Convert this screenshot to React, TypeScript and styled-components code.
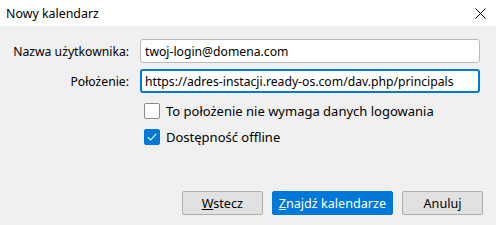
import { FC } from "react"
import styled, { createGlobalStyle } from "styled-components"

const GlobalStyle = createGlobalStyle`
  html, body {
    margin: 0;
    padding: 0;
    background: #f0f0f0;
  }
  body {
    font-family: "Noto Sans", "Segoe UI", "Liberation Sans", sans-serif;
    font-size: 12.4px;
    color: #000;
  }
`

const Window = styled.div`
  width: 496px;
  height: 225px;
  display: flex;
  flex-direction: column;
  background: #f0f0f0;
  overflow: hidden;
`

const TitleBar = styled.div`
  height: 26px;
  flex: none;
  display: flex;
  align-items: center;
  justify-content: space-between;
  padding: 0 8px 0 6px;
  background: #fff;
`

const CloseButton = styled.div`
  width: 12px;
  height: 12px;
  display: flex;
  align-items: center;
  justify-content: center;
  margin-right: 2px;
`

const Body = styled.div`
  flex: 1;
  display: flex;
  flex-direction: column;
  padding-top: 13px;
`

const FormGrid = styled.div`
  display: grid;
  grid-template-columns: 129px 340px;
  column-gap: 11px;
  row-gap: 6px;
  align-items: center;
`

const Label = styled.label`
  text-align: right;
  white-space: nowrap;
  font-size: 12.2px;
`

const TextInput = styled.div<{ focused?: boolean }>`
  height: 24px;
  box-sizing: border-box;
  display: flex;
  align-items: center;
  padding: 0 ${({ focused }) => (focused ? "3px" : "4px")};
  font-size: 12.2px;
  background: #fff;
  border: ${({ focused }) =>
    focused ? "2px solid #0078d7" : "1px solid #b9b9b9"};
  border-radius: 3px;
  white-space: nowrap;
  overflow: hidden;
`

const Options = styled.div`
  display: flex;
  flex-direction: column;
  gap: 10px;
  padding-left: 144px;
  margin-top: 10px;
  font-size: 13px;
`

const OptionRow = styled.div`
  display: flex;
  align-items: center;
  gap: 6px;
  height: 16px;
`

const Box = styled.span<{ checked?: boolean }>`
  width: 16px;
  height: 16px;
  box-sizing: border-box;
  display: flex;
  align-items: center;
  justify-content: center;
  border-radius: 2px;
  border: 1px solid ${({ checked }) => (checked ? "#0078d7" : "#8a8a8a")};
  background: ${({ checked }) => (checked ? "#0078d7" : "#fff")};
`

const Footer = styled.div`
  margin-top: auto;
  display: flex;
  justify-content: flex-end;
  gap: 9px;
  padding: 0 13px 10px 0;
`

const Button = styled.button<{ primary?: boolean }>`
  height: 24px;
  min-width: 81px;
  padding: 0 6px;
  box-sizing: border-box;
  font: inherit;
  font-size: 12.6px;
  border-radius: 2px;
  border: 1px solid ${({ primary }) => (primary ? "#0078d7" : "#adadad")};
  background: ${({ primary }) => (primary ? "#0078d7" : "#e1e1e1")};
  color: ${({ primary }) => (primary ? "#fff" : "#000")};
`

const Key = styled.span`
  text-decoration: underline;
`

const Checkbox: FC<{ checked?: boolean; label: string }> = ({
  checked,
  label,
}) => (
  <OptionRow>
    <Box checked={checked}>
      {checked && (
        <svg width="10" height="8" viewBox="0 0 10 8">
          <path d="M0.8 4.2 L3.6 7 L9.2 0.8" fill="none" stroke="#fff" strokeWidth="1.1" />
        </svg>
      )}
    </Box>
    <span>{label}</span>
  </OptionRow>
)

export default function App() {
  return (
    <>
      <GlobalStyle />
      <Window>
        <TitleBar>
          <span>Nowy kalendarz</span>
          <CloseButton>
            <svg width="11" height="11" viewBox="0 0 11 11">
              <path d="M0.5 0.5 L10.5 10.5 M10.5 0.5 L0.5 10.5" stroke="#000" strokeWidth="1" />
            </svg>
          </CloseButton>
        </TitleBar>
        <Body>
          <FormGrid>
            <Label>Nazwa użytkownika:</Label>
            <TextInput>twoj-login@domena.com</TextInput>
            <Label>Położenie:</Label>
            <TextInput focused>
              https://adres-instacji.ready-os.com/dav.php/principals
            </TextInput>
          </FormGrid>
          <Options>
            <Checkbox label="To położenie nie wymaga danych logowania" />
            <Checkbox checked label="Dostępność offline" />
          </Options>
          <Footer>
            <Button>
              <Key>W</Key>stecz
            </Button>
            <Button primary>
              <Key>Z</Key>najdź kalendarze
            </Button>
            <Button>Anuluj</Button>
          </Footer>
        </Body>
      </Window>
    </>
  )
}
